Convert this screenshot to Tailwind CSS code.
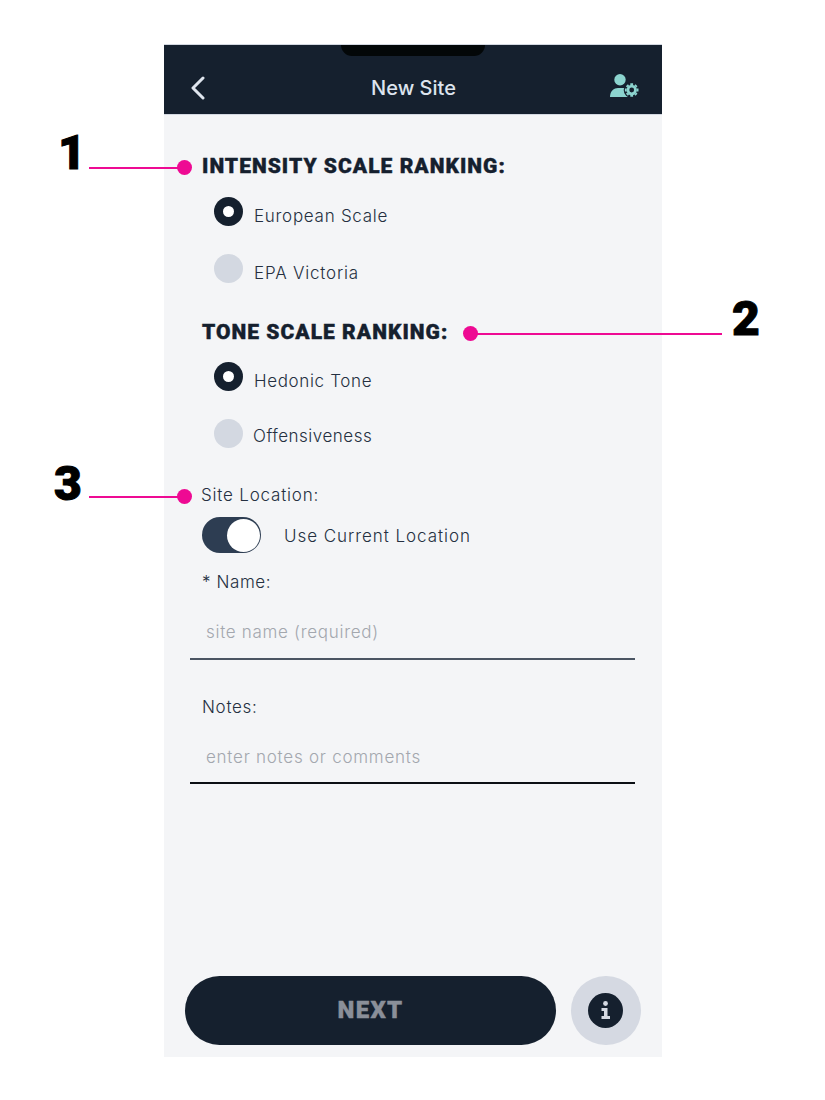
<!DOCTYPE html>
<html lang="en">

<head>
    <meta charset="UTF-8" />
    <meta name="viewport" content="width=device-width, initial-scale=1.0" />
    <title>New Site</title>
    <script src="https://cdn.jsdelivr.net/npm/@tailwindcss/browser@4"></script>
</head>

<body class="relative w-[825px] h-[1100px] bg-white overflow-hidden font-['Inter',sans-serif]">
    <!-- Phone screen -->
    <div class="ml-[164px] pt-[44px] w-[498px]">
        <div class="flex flex-col h-[1013px] bg-[#f4f5f7] border-t border-[#d3d8e1]">
            <!-- Header -->
            <header class="relative flex items-center justify-between h-[70px] bg-[#15202e] border-b border-[#d3d8e1] pl-[26px] pr-[22px] pt-[17px] shrink-0">
                <div class="absolute left-[177px] top-0 w-[144px] h-[11px] bg-[#030708] rounded-b-[14px]"></div>
                <svg class="w-[30px] h-[24px]" viewBox="0 0 30 24" fill="none" stroke="#dfe5ee" stroke-width="3" stroke-linecap="round" stroke-linejoin="round">
                    <path d="M13 2 L3 12 L13 22" />
                </svg>
                <span class="mr-[3px] text-[20px] font-medium text-[#dde4ee]">New Site</span>
                <svg class="w-[30px] h-[24px] mb-[4px]" viewBox="0 0 30 24" fill="#8cd4cf">
                    <circle cx="10" cy="5.8" r="5.7" />
                    <path d="M0 23 C0 17 4 14 8 14 H13 C15 14 17 14.6 19 16 V23 Z" />
                    <circle cx="21.7" cy="16" r="8" fill="#15202e" />
                    <g fill="none" stroke="#8cd4cf">
                        <circle cx="21.7" cy="16" r="3.8" stroke-width="2.8" />
                        <path stroke-width="2.8" d="M21.7 9.2 V11 M21.7 21 V22.8 M14.9 16 H16.7 M26.7 16 H28.5 M16.9 11.2 L18.1 12.4 M25.3 19.6 L26.5 20.8 M16.9 20.8 L18.1 19.6 M25.3 12.4 L26.5 11.2" />
                    </g>
                </svg>
            </header>

            <!-- Form -->
            <main class="flex flex-col flex-1 font-[350] text-[#253041]">
                <h2 class="mt-[39px] ml-[38px] text-[21px] leading-[24px] font-black tracking-[1.03px] text-[#15202e] [-webkit-text-stroke:0.4px_#15202e] font-['Roboto',sans-serif]">INTENSITY SCALE RANKING:</h2>

                <label class="flex items-center mt-[19px] ml-[50px] gap-[11px] text-[17px] leading-[20px] tracking-[0.72px]">
                    <span class="flex items-center justify-center w-[29px] h-[29px] rounded-full bg-[#15202e]"><span class="w-[11px] h-[11px] rounded-full bg-white"></span></span>
                    <span class="mt-[9px]">European Scale</span>
                </label>
                <label class="flex items-center mt-[28px] ml-[50px] gap-[11px] text-[17px] leading-[20px] tracking-[0.8px]">
                    <span class="w-[29px] h-[29px] rounded-full bg-[#d3d8e1]"></span>
                    <span class="mt-[9px]">EPA Victoria</span>
                </label>

                <h2 class="mt-[37px] ml-[38px] text-[21px] leading-[24px] font-black tracking-[1.03px] text-[#15202e] [-webkit-text-stroke:0.4px_#15202e] font-['Roboto',sans-serif]">TONE SCALE RANKING:</h2>

                <label class="flex items-center mt-[18px] ml-[50px] gap-[11px] text-[17px] leading-[20px] tracking-[0.65px]">
                    <span class="flex items-center justify-center w-[29px] h-[29px] rounded-full bg-[#15202e]"><span class="w-[11px] h-[11px] rounded-full bg-white"></span></span>
                    <span class="mt-[9px]">Hedonic Tone</span>
                </label>
                <label class="flex items-center mt-[28px] ml-[50px] gap-[10px] text-[17px] leading-[20px] tracking-[0.5px]">
                    <span class="w-[29px] h-[29px] rounded-full bg-[#d3d8e1]"></span>
                    <span class="mt-[5px]">Offensiveness</span>
                </label>

                <p class="mt-[37px] ml-[37px] text-[17px] leading-[20px] tracking-[0.8px]">Site Location:</p>

                <div class="flex items-center mt-[12px] ml-[38px] gap-[23px]">
                    <span class="flex items-center justify-end w-[59px] h-[36px] rounded-full bg-[#2d3d52] pr-[1px]"><span class="w-[33px] h-[33px] rounded-full bg-white"></span></span>
                    <span class="mt-[3px] text-[17px] tracking-[0.95px]">Use Current Location</span>
                </div>

                <p class="mt-[18px] ml-[38px] pt-[1px] text-[17px] leading-[20px] tracking-[0.6px]">* Name:</p>
                <div class="flex items-center mt-[15px] ml-[26px] mr-[27px] h-[53px] pl-[16px] pt-[1px] border-b-[2px] border-[#4b5563] text-[17px] tracking-[0.7px] text-[#a3a7ae]">site name (required)</div>

                <p class="mt-[36px] ml-[38px] pt-[1px] text-[17px] leading-[20px] tracking-[0.7px]">Notes:</p>
                <div class="flex items-center mt-[15px] ml-[26px] mr-[27px] h-[52px] pl-[16px] pt-[1px] border-b-[2px] border-[#0b0f14] text-[17px] tracking-[0.75px] text-[#a3a7ae]">enter notes or comments</div>

                <!-- Bottom actions -->
                <div class="flex items-center gap-[15px] mt-auto mb-[12px] ml-[21px]">
                    <button class="w-[371px] h-[69px] pb-[2px] rounded-full bg-[#15202e] text-[24px] font-black tracking-[1.3px] text-[#8a8f99] [-webkit-text-stroke:0.4px_#8a8f99] font-['Roboto',sans-serif]">NEXT</button>
                    <div class="flex items-center justify-center w-[70px] h-[69px] pr-[1px] rounded-full bg-[#d5d9e2]">
                        <svg class="w-[35px] h-[35px]" viewBox="0 0 35 35">
                            <circle cx="17.5" cy="17.5" r="17.5" fill="#15202e" />
                            <circle cx="17.5" cy="10.5" r="2.4" fill="#d5d9e2" />
                            <path d="M13.5 15 H19.5 V23 H22 V26 H13.5 V23 H16 V18 H13.5 Z" fill="#d5d9e2" />
                        </svg>
                    </div>
                </div>
            </main>
        </div>
    </div>

    <!-- Annotations -->
    <span class="absolute left-[58px] top-[125px] text-[48px] leading-[56px] font-black text-black [-webkit-text-stroke:1px_#000] font-['Roboto',sans-serif]">1</span>
    <div class="absolute left-[89px] top-[167px] w-[90px] h-[2px] bg-[#ee0a93]"></div>
    <div class="absolute left-[177px] top-[160px] w-[15px] h-[15px] rounded-full bg-[#ee0a93]"></div>

    <span class="absolute left-[732px] top-[291px] text-[48px] leading-[56px] font-black text-black [-webkit-text-stroke:1px_#000] font-['Roboto',sans-serif]">2</span>
    <div class="absolute left-[475px] top-[333px] w-[247px] h-[2px] bg-[#ee0a93]"></div>
    <div class="absolute left-[463px] top-[326px] w-[15px] h-[15px] rounded-full bg-[#ee0a93]"></div>

    <span class="absolute left-[54px] top-[456px] text-[48px] leading-[56px] font-black text-black [-webkit-text-stroke:1px_#000] font-['Roboto',sans-serif]">3</span>
    <div class="absolute left-[89px] top-[496px] w-[90px] h-[2px] bg-[#ee0a93]"></div>
    <div class="absolute left-[177px] top-[489px] w-[15px] h-[15px] rounded-full bg-[#ee0a93]"></div>
</body>

</html>
